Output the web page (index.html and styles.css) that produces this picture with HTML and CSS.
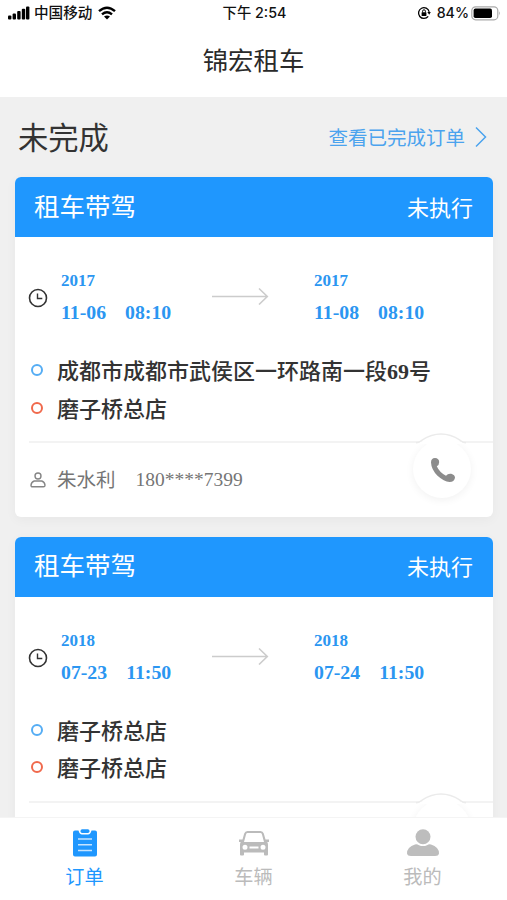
FILE: index.html
```html
<!DOCTYPE html>
<html lang="zh-CN">
<head>
<meta charset="utf-8">
<title>锦宏租车</title>
<link rel="stylesheet" href="styles.css">
</head>
<body>
<div class="app">
  <header class="top">
    <div class="status">
      <div class="status-left">
        <svg class="signal" viewBox="0 0 22 14" width="22" height="14"><rect x="0" y="9.5" width="3.4" height="4" rx="1"/><rect x="4.6" y="7.5" width="3.4" height="6" rx="1"/><rect x="9.2" y="5" width="3.4" height="8.5" rx="1"/><rect x="13.8" y="2.7" width="3.4" height="10.8" rx="1"/><rect x="18" y="0.5" width="3.4" height="13" rx="1"/></svg>
        <span>中国移动</span>
        <svg class="wifi" viewBox="0 0 18 14" width="18" height="14" fill="none" stroke="#000" stroke-width="2.4"><path d="M1 5.2Q9-1.8 17 5.2M4 8.4Q9 4.2 14 8.4"/><path d="M6 10.6Q9 8.2 12 10.6L9 13.6Z" fill="#000" stroke="none"/></svg>
      </div>
      <div class="status-time">下午 2:54</div>
      <div class="status-right">
        <svg viewBox="0 0 14 14" width="14" height="14" fill="none" stroke="#000" stroke-width="1.3"><path d="M12.2 5.8A5.4 5.4 0 1 0 11.2 10.4"/><path d="M10.3 6H13.8L12.2 8.8Z" fill="#000" stroke="none"/><rect x="4.6" y="6.3" width="4.8" height="3.8" rx=".5" fill="#000" stroke="none"/><path d="M5.6 6.5V5.2a1.4 1.4 0 0 1 2.8 0V6.5" stroke-width="1"/></svg>
        <span>84%</span>
        <svg viewBox="0 0 30 15" width="30" height="15"><rect x=".8" y=".8" width="26" height="13" rx="3.8" fill="#fff" stroke="#aaa" stroke-width="1.2"/><rect x="2.6" y="2.6" width="18.4" height="9.4" rx="1.8"/><path d="M28.3 5.2Q30 7.3 28.3 9.4Z" fill="#999"/></svg>
      </div>
    </div>
    <h1>锦宏租车</h1>
  </header>

  <main class="content">
    <div class="section-head">
      <h2>未完成</h2>
      <a class="more"><span>查看已完成订单</span><svg viewBox="0 0 12 22" width="12" height="22" fill="none" stroke="#4ba3ee" stroke-width="1.5"><path d="M1 1.5 10.5 11 1 20.5"/></svg></a>
    </div>

    <article class="card">
      <div class="card-head"><span class="kind">租车带驾</span><span class="state">未执行</span></div>
      <div class="period">
        <svg class="clock" viewBox="0 0 20 20" width="20" height="20" fill="none" stroke="#333" stroke-width="1.6"><circle cx="10" cy="10" r="8.5"/><path d="M9.5 5.5V10.5H14.3" stroke-width="1.4"/></svg>
        <div class="moment"><div class="year">2017</div><div class="date"><span>11-06</span><span>08:10</span></div></div>
        <svg class="arrow" viewBox="0 0 58 18" width="58" height="18" fill="none" stroke="#ccc" stroke-width="1.6"><path d="M0 9.5H55M47 1.500 55.3 9.5 47 17.500"/></svg>
        <div class="moment"><div class="year">2017</div><div class="date"><span>11-08</span><span>08:10</span></div></div>
      </div>
      <div class="place from">成都市成都市武侯区一环路南一段<b>69</b>号</div>
      <div class="place to">磨子桥总店</div>
      <div class="contact">
        <svg class="person" viewBox="0 0 16 16" width="16" height="16" fill="none" stroke="#858585" stroke-width="1.4"><circle cx="8" cy="4" r="3"/><path d="M4.2 9H11.8Q14.6 10 15 13.2Q15 14.8 13.4 14.8H2.6Q1 14.8 1 13.2Q1.4 10 4.2 9Z"/></svg>
        <span class="name">朱水利</span><span class="phone">180****7399</span>
        <div class="call"><svg class="bump" viewBox="0 0 50 11" width="50" height="11"><path d="M0 9.8Q5 9.8 8 7Q25-5 42 7Q45 9.8 50 9.8V11H0Z" fill="#fff"/><path d="M0 9.8Q3 9.8 6 7.2Q25-5 44 7.2Q47 9.8 50 9.8" fill="none" stroke="#ebebeb" stroke-width="1.5"/></svg><div class="call-disc"><svg class="handset" viewBox="0 0 26 26" width="26" height="26" fill="#8c8c8c"><path d="M1 5.500Q1 1 5 1Q9 1.300 9.200 5Q9.200 8 6.800 9.300Q9.500 15.500 16 18.800Q18 16.200 21.200 16.800Q25 17.800 25 20.800Q24.300 25 19.500 25Q14 24.600 7.500 18.800Q1.300 12.500 1 5.500Z"/></svg></div></div>
      </div>
    </article>

    <article class="card">
      <div class="card-head"><span class="kind">租车带驾</span><span class="state">未执行</span></div>
      <div class="period">
        <svg class="clock" viewBox="0 0 20 20" width="20" height="20" fill="none" stroke="#333" stroke-width="1.6"><circle cx="10" cy="10" r="8.5"/><path d="M9.5 5.5V10.5H14.3" stroke-width="1.4"/></svg>
        <div class="moment"><div class="year">2018</div><div class="date"><span>07-23</span><span>11:50</span></div></div>
        <svg class="arrow" viewBox="0 0 58 18" width="58" height="18" fill="none" stroke="#ccc" stroke-width="1.6"><path d="M0 9.5H55M47 1.500 55.3 9.5 47 17.500"/></svg>
        <div class="moment"><div class="year">2018</div><div class="date"><span>07-24</span><span>11:50</span></div></div>
      </div>
      <div class="place from">磨子桥总店</div>
      <div class="place to">磨子桥总店</div>
      <div class="contact">
        <div class="call"><svg class="bump" viewBox="0 0 50 11" width="50" height="11"><path d="M0 9.8Q5 9.8 8 7Q25-5 42 7Q45 9.8 50 9.8V11H0Z" fill="#fff"/><path d="M0 9.8Q3 9.8 6 7.2Q25-5 44 7.2Q47 9.8 50 9.8" fill="none" stroke="#ebebeb" stroke-width="1.5"/></svg><div class="call-disc"></div></div>
      </div>
    </article>
  </main>

  <nav class="tabs">
    <a class="tab active"><svg viewBox="0 0 26 28" width="26" height="28"><path d="M3 1.500H6.500Q7.500 5.500 10 5.500H16Q18.500 5.500 19.500 1.500H23Q25 1.500 25 3.500V25.500Q25 27.500 23 27.500H3Q1 27.500 1 25.500V3.500Q1 1.500 3 1.500Z" fill="#1f97fe"/><rect x="8.500" y=".3" width="9" height="3.600" rx="1.600" fill="#1f97fe"/><path d="M6 10H20M6 15.800H20M6 21.400H20" stroke="#c5e4ff" stroke-width="1.500"/></svg><span>订单</span></a>
    <a class="tab"><svg viewBox="0 0 30 28" width="30" height="28" fill="#bbb"><path fill-rule="evenodd" d="M8.500 2H21.500Q24 2 24.800 4.500L26.500 10.500H30V13H28.300Q29 14 29 16V25.500Q29 26.500 28 26.500H26Q25 26.500 25 25.500V23.500H5V25.500Q5 26.500 4 26.500H2Q1 26.500 1 25.500V16Q1 14 1.700 13H0V10.500H3.500L5.200 4.500Q6 2 8.500 2ZM8.500 4Q7.500 4 7.100 5.200L5 13H25L22.900 5.200Q22.500 4 21.500 4ZM6 15.700A2.500 2.500 0 1 0 6 20.700A2.500 2.500 0 1 0 6 15.700ZM24 15.700A2.500 2.500 0 1 0 24 20.700A2.500 2.500 0 1 0 24 15.700ZM10.500 17.500V19.500H19.500V17.500Z"/></svg><span>车辆</span></a>
    <a class="tab"><svg viewBox="0 0 32 28" width="32" height="28" fill="#bdbdbd"><circle cx="16" cy="7.700" r="7.500"/><path d="M8 15.500Q10 15 12 16.200Q16 18 20 16.200Q22 15 24 15.500Q32 18 32 24.500Q31.500 27 28 27H4Q.5 27 0 24.500Q0 18 8 15.500Z"/></svg><span>我的</span></a>
  </nav>
</div>
</body>
</html>
```
FILE: styles.css
```css
* { box-sizing: border-box; }
body { margin: 0; font-family: "Liberation Serif", "Noto Sans CJK SC", serif; color: #333; }
svg { display: block; flex: none; }
h1, h2 { margin: 0; font-weight: 400; }
.app { height: 900px; display: flex; flex-direction: column; overflow: hidden; background: #f0f0f0; }
.top { height: 97px; flex: none; background: #fff; }
.status { height: 26px; display: grid; grid-template-columns: 1fr auto 1fr; align-items: center; padding: 0 6px 0 8px; font: 500 14.6px/26px Inter, "Noto Sans CJK SC", sans-serif; color: #111; }
.status-left, .status-right { display: flex; align-items: center; }
.status-left span { margin: 0 6px 0 4px; }
.status-time { font-size: 14.3px; }
.status-right { justify-content: flex-end; }
.status-right span { margin: 0 2px 0 6px; font-size: 14.2px; }
h1 { font-size: 25.4px; line-height: 71px; text-align: center; color: #2a2a2a; }
.content { flex: 1; min-height: 0; overflow: hidden; padding: 0 14px 0 15px; }
.section-head { height: 80px; display: flex; align-items: center; justify-content: space-between; padding: 0 6px 0 3px; }
h2 { font-size: 30.3px; line-height: 40px; padding-top: 4px; }
.more { display: flex; align-items: center; gap: 10px; font-size: 19.5px; line-height: 30px; color: #4ba3ee; }
.more span { padding-top: 3px; }
.card { height: 340px; margin-bottom: 19.5px; border-radius: 6px; background: #fff; box-shadow: 0 3px 12px rgba(0, 0, 0, .04); }
.card-head { height: 60px; display: flex; align-items: center; justify-content: space-between; padding: 0 20px 0 19px; border-radius: 6px 6px 0 0; background: #1f97fe; color: #fff; }
.kind { font-size: 25.5px; line-height: 60px; padding-top: 1px; }
.state { font-size: 22px; line-height: 60px; padding-top: 3px; }
.period { height: 116px; display: flex; align-items: flex-start; padding: 31px 0 0 13px; color: #2b96f1; font-weight: 700; }
.clock { margin: 20px 13px 0 0; }
.moment { width: 110px; }
.year { font-size: 17px; line-height: 26px; }
.date { display: flex; gap: 19px; font-size: 19.8px; line-height: 37px; white-space: nowrap; }
.arrow { margin: 19px 44px 0 41px; }
.place { position: relative; height: 37.5px; padding-left: 42px; font-size: 22px; line-height: 38.5px; font-weight: 500; }
.place::before { content: ""; box-sizing: border-box; position: absolute; left: 16px; top: 11px; width: 12px; height: 12px; border: 2px solid #55adf4; border-radius: 50%; }
.place b { font-weight: 700; }
.to::before { border-color: #f0694c; }
.contact { position: relative; height: 76px; margin: 13px 0 0 14px; border-top: 2px solid #f3f3f3; display: flex; align-items: center; font-size: 19.5px; color: #757575; }
.person { margin-left: 1px; }
.name { margin: -4px 20px 0 11px; }
.call { position: absolute; right: 22px; top: -10px; width: 58px; }
.bump { margin: 0 0 -1px 1px; width: 54px; }
.call-disc { width: 58px; height: 58px; margin-top: -4px; display: flex; align-items: center; justify-content: center; border-radius: 50%; background: #fff; box-shadow: 0 2px 8px rgba(0, 0, 0, .06); }
.handset { margin: 2px 0 0 2px; }
.tabs { height: 83px; flex: none; display: grid; grid-template-columns: repeat(3, 1fr); background: #fff; border-top: 1px solid #f4f4f4; }
.tab { display: flex; flex-direction: column; align-items: center; padding-top: 11px; font-size: 19.2px; line-height: 30px; color: #bbb; }
.tab span { margin-top: 6px; }
.active { color: #1f97fe; }
```
